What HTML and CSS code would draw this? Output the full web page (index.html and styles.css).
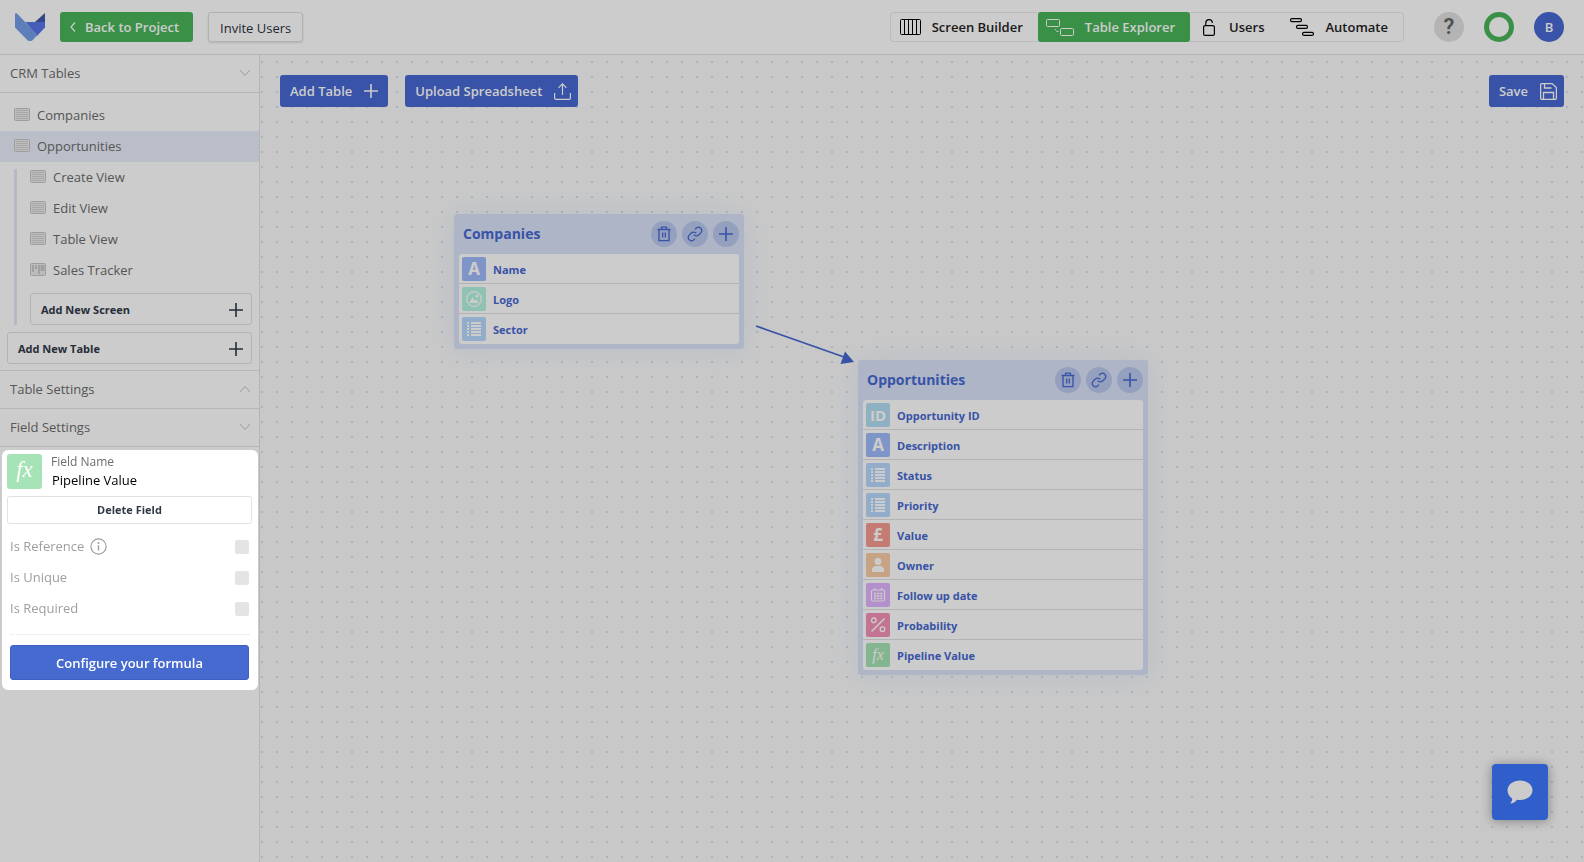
FILE: index.html
```html
<!DOCTYPE html>
<html lang="en">
<head>
<meta charset="utf-8">
<title>Table Explorer</title>
<link rel="stylesheet" href="styles.css">
</head>
<body>
<svg class="defs" aria-hidden="true">
  <symbol id="plus" viewBox="0 0 14 14"><path d="M7 0v14M0 7h14" fill="none" stroke="currentColor" stroke-width="1.6"/></symbol>
  <symbol id="chevron" viewBox="0 0 12 8"><path d="M1 1l5 5.500 5-5.500" fill="none" stroke="currentColor" stroke-width="1"/></symbol>
  <symbol id="screen" viewBox="0 0 16 13"><rect x=".5" y=".5" width="15" height="12" rx="1" fill="#ececec" stroke="currentColor"/><path d="M2 2.500h12M2 4.500h12M2 6.500h12M2 8.500h12M2 10.500h12" stroke="#d2d2d2"/></symbol>
  <symbol id="board" viewBox="0 0 16 13"><rect x=".5" y=".5" width="15" height="12" rx="1" fill="#ececec" stroke="currentColor"/><path d="M3 2v7M6 2v4M9 2v9M11.500 2v6M13.500 2v6" stroke="currentColor" stroke-width="1.800"/></symbol>
  <symbol id="trash" viewBox="0 0 16 16"><path d="M1.500 3.500h13M5.500 3.300V1.200h5v2.100M3 3.700v11h10v-11M6.700 6.500v5M9.300 6.500v5" fill="none" stroke="currentColor" stroke-width="1.300" stroke-linejoin="round"/></symbol>
  <symbol id="link" viewBox="0 0 24 24"><path d="M10 13a5 5 0 0 0 7.500.5l3.500-3.500a5 5 0 0 0-7-7l-2 2M14 11a5 5 0 0 0-7.500-.5L3 14a5 5 0 0 0 7 7l2-2" fill="none" stroke="currentColor" stroke-width="1.900"/></symbol>
  <symbol id="list" viewBox="0 0 16 16"><path d="M1 2h2M1 5h2M1 8h2M1 11h2M1 14h2M5 2h10M5 5h10M5 8h10M5 11h10M5 14h10" stroke="currentColor" stroke-width="2"/></symbol>
  <symbol id="image" viewBox="0 0 16 16"><circle cx="8" cy="8" r="7.300" fill="none" stroke="currentColor" stroke-width="1.200"/><path d="M3 12l3.500-5.500L9 10l1.200-1.500L13 12z" fill="currentColor"/><circle cx="11" cy="5" r="1.500" fill="currentColor"/></symbol>
  <symbol id="person" viewBox="0 0 16 16"><circle cx="8" cy="4.500" r="3.400" fill="currentColor"/><path d="M2 15v-2c0-2.500 2-4 4-4h4c2 0 4 1.500 4 4v2z" fill="currentColor"/></symbol>
  <symbol id="calendar" viewBox="0 0 16 16"><rect x="1.500" y="3" width="13" height="11" rx="1.500" fill="none" stroke="currentColor" stroke-width="1.200"/><path d="M4.500 1v2M11.500 1v2" stroke="currentColor" stroke-width="1.200"/><path d="M4 6.500h8.500M4 9h8.500M4 11.500h8.500" stroke="currentColor" stroke-width="1.700" stroke-dasharray="2.300 .8"/></symbol>
  <symbol id="percent" viewBox="0 0 16 16"><path d="M14.500 1.500l-13 13" stroke="currentColor" stroke-width="1.500"/><circle cx="3.800" cy="3.300" r="2.300" fill="none" stroke="currentColor" stroke-width="1.300"/><circle cx="12.500" cy="12.200" r="2.300" fill="none" stroke="currentColor" stroke-width="1.300"/></symbol>
</svg>

<header class="topbar">
  <svg class="logo" viewBox="0 0 30 28" aria-label="Home" role="img">
    <path d="M20.500 8.500L30 0v9h-10z" fill="#4358a8"/>
    <path d="M10.500 9H30v5.500L22 23z" fill="#5876e8"/>
    <path d="M0 1.500C0 0 1.500 0 2.500 1L22.500 22l-5 5.200c-1.500 1.200-3.500 1.200-5 0L0 14.500z" fill="#759fe8"/>
  </svg>
  <button class="back"><svg class="back-arrow" viewBox="0 0 6 10"><path d="M5 .5L1 5l4 4.500" fill="none" stroke="currentColor" stroke-width="1.200"/></svg>Back to Project</button>
  <button class="invite">Invite Users</button>
  <nav class="modes">
    <button class="mode mode-builder"><svg width="21" height="16" viewBox="0 0 21 16"><path d="M.5 1.500q0-1 1-1h18q1 0 1 1v13q0 1-1 1h-18q-1 0-1-1zM4.500 .5v15M8.500 .5v15M12.500 .5v15M16.500 .5v15" fill="none" stroke="currentColor"/></svg>Screen Builder</button>
    <button class="mode mode-tables"><svg width="28" height="17" viewBox="0 0 28 17"><rect x=".5" y=".5" width="13" height="7" rx="1" fill="none" stroke="currentColor"/><rect x="14.500" y="9.500" width="13" height="7" rx="1" fill="none" stroke="currentColor"/><path d="M9 10l1 1.500M10.500 12.500h2" stroke="currentColor"/></svg>Table Explorer</button>
    <button class="mode mode-users"><svg width="12" height="17" viewBox="0 0 12 17"><rect x=".6" y="6.600" width="10.800" height="9.800" rx="1.500" fill="none" stroke="currentColor" stroke-width="1.200"/><path d="M2.800 6.500V4c0-4.500 6.500-4.500 6.500 0" fill="none" stroke="currentColor" stroke-width="1.200"/></svg>Users</button>
    <button class="mode mode-automate"><svg width="24" height="18" viewBox="0 0 24 18"><g fill="none" stroke="currentColor" stroke-width="1.200"><rect x=".6" y=".6" width="10.800" height="3" rx="1.200"/><rect x="6.600" y="7.400" width="10.800" height="3" rx="1.200"/><rect x="12.600" y="14.300" width="10.800" height="3" rx="1.200"/></g></svg>Automate</button>
  </nav>
  <button class="round help">?</button>
  <span class="round ring"></span>
  <button class="round avatar">B</button>
</header>

<div class="workspace">
  <aside class="sidebar">
    <button class="section">CRM Tables<svg class="chevron"><use href="#chevron"/></svg></button>
    <div class="tables">
      <button class="item"><svg class="screen"><use href="#screen"/></svg>Companies</button>
      <button class="item selected"><svg class="screen"><use href="#screen"/></svg>Opportunities</button>
      <div class="views">
        <button class="item"><svg class="screen"><use href="#screen"/></svg>Create View</button>
        <button class="item"><svg class="screen"><use href="#screen"/></svg>Edit View</button>
        <button class="item"><svg class="screen"><use href="#screen"/></svg>Table View</button>
        <button class="item"><svg class="screen"><use href="#board"/></svg>Sales Tracker</button>
        <button class="outline add-screen">Add New Screen<svg class="plus"><use href="#plus"/></svg></button>
      </div>
      <button class="outline add-table">Add New Table<svg class="plus"><use href="#plus"/></svg></button>
    </div>
    <button class="section">Table Settings<svg class="chevron up"><use href="#chevron"/></svg></button>
    <button class="section">Field Settings<svg class="chevron"><use href="#chevron"/></svg></button>
    <form class="field-panel">
      <div class="field-head">
        <span class="field-icon">fx</span>
        <div class="field-name">
          <label for="field-name">Field Name</label>
          <input id="field-name" type="text" value="Pipeline Value">
        </div>
      </div>
      <button type="button" class="outline delete">Delete Field</button>
      <div class="options">
        <div class="option"><label for="is-reference">Is Reference</label><svg class="info" viewBox="0 0 17 17"><circle cx="8.500" cy="8.500" r="7.600" fill="none" stroke="currentColor" stroke-width="1.200"/><circle cx="8.500" cy="5" r="1" fill="currentColor"/><path d="M8.500 7.200v5.300" stroke="currentColor" stroke-width="1.500"/></svg><input id="is-reference" type="checkbox" disabled></div>
        <div class="option"><label for="is-unique">Is Unique</label><input id="is-unique" type="checkbox" disabled></div>
        <div class="option"><label for="is-required">Is Required</label><input id="is-required" type="checkbox" disabled></div>
      </div>
      <button type="button" class="configure">Configure your formula</button>
    </form>
  </aside>

  <main class="canvas">
    <div class="toolbar">
      <button class="primary">Add Table<svg class="plus"><use href="#plus"/></svg></button>
      <button class="primary upload">Upload Spreadsheet<svg width="17" height="17" viewBox="0 0 17 17"><path d="M.6 10v5q0 1.400 1.400 1.400h13q1.400 0 1.400-1.400v-5M8.500 12V1M4.500 4.800l4-4 4 4" fill="none" stroke="currentColor" stroke-width="1.200"/></svg></button>
      <button class="primary save">Save<svg width="17" height="17" viewBox="0 0 17 17"><path d="M.6 2q0-1.400 1.400-1.400h10l4.400 4V15q0 1.400-1.400 1.400H2Q.6 16.400.6 15zM3.500 16v-6.500h10V16M4.500 1v4h7" fill="none" stroke="currentColor" stroke-width="1.300"/></svg></button>
    </div>

    <svg class="arrow" viewBox="0 0 100 40"><path d="M1 3l88 31" stroke="#4768d1" stroke-width="1.800"/><path d="M90 28.500l9 10.500-13.500 2z" fill="#4768d1"/></svg>

    <section class="node companies">
      <div class="node-head"><h2>Companies</h2>
        <button class="tool" aria-label="Delete"><svg class="tool-icon"><use href="#trash"/></svg></button>
        <button class="tool" aria-label="Link"><svg class="tool-icon"><use href="#link"/></svg></button>
        <button class="tool" aria-label="Add"><svg class="plus"><use href="#plus"/></svg></button>
      </div>
      <ul class="fields">
        <li><span class="type text">A</span><span class="name">Name</span></li>
        <li><span class="type image"><svg><use href="#image"/></svg></span><span class="name">Logo</span></li>
        <li><span class="type list"><svg><use href="#list"/></svg></span><span class="name">Sector</span></li>
      </ul>
    </section>

    <section class="node opportunities">
      <div class="node-head"><h2>Opportunities</h2>
        <button class="tool" aria-label="Delete"><svg class="tool-icon"><use href="#trash"/></svg></button>
        <button class="tool" aria-label="Link"><svg class="tool-icon"><use href="#link"/></svg></button>
        <button class="tool" aria-label="Add"><svg class="plus"><use href="#plus"/></svg></button>
      </div>
      <ul class="fields">
        <li><span class="type id">ID</span><span class="name">Opportunity ID</span></li>
        <li><span class="type text">A</span><span class="name">Description</span></li>
        <li><span class="type list"><svg><use href="#list"/></svg></span><span class="name">Status</span></li>
        <li><span class="type list"><svg><use href="#list"/></svg></span><span class="name">Priority</span></li>
        <li><span class="type money">£</span><span class="name">Value</span></li>
        <li><span class="type person"><svg><use href="#person"/></svg></span><span class="name">Owner</span></li>
        <li><span class="type date"><svg><use href="#calendar"/></svg></span><span class="name">Follow up date</span></li>
        <li><span class="type percent"><svg><use href="#percent"/></svg></span><span class="name">Probability</span></li>
        <li><span class="type formula">fx</span><span class="name">Pipeline Value</span></li>
      </ul>
    </section>

    <button class="chat" aria-label="Chat"><svg width="26" height="24" viewBox="0 0 26 24"><path d="M13 .5C20 .5 25.500 4.800 25.500 10.200S20 20 13 20c-1 0-2-.1-3-.3C8.500 21.800 6 23.500 3.200 23.500c1.300-1.500 2-3 2-5C2.500 16.700.5 13.700.5 10.200.5 4.800 6 .5 13 .5z" fill="currentColor"/></svg></button>
  </main>
</div>
</body>
</html>
```
FILE: styles.css
```css
* { box-sizing: border-box; }

body {
  margin: 0;
  min-height: 100vh;
  display: flex;
  flex-direction: column;
  overflow: hidden;
  background: #fff;
  color: #6c6c6c;
  font: 13px/20px "Open Sans", "Noto Sans", sans-serif;
}

button {
  display: flex;
  align-items: center;
  margin: 0;
  padding: 0;
  border: 0;
  background: none;
  color: inherit;
  font: inherit;
  white-space: nowrap;
  cursor: pointer;
}

svg { flex: none; display: block; }
.defs { position: absolute; width: 0; height: 0; }
.plus { width: 14px; height: 14px; }

/* Top bar */
.topbar {
  display: flex;
  align-items: center;
  height: 55px;
  padding: 0 20px 0 15px;
  border-bottom: 1px solid #e2e2e2;
}
.logo { width: 30px; height: 28px; margin-right: 15px; }
.back {
  height: 30px;
  padding: 0 14px 0 10px;
  gap: 9px;
  border-radius: 3px;
  background: #4ab55b;
  color: #fff;
  font-weight: 600;
}
.back-arrow { width: 6px; height: 10px; }
.invite {
  height: 30px;
  margin-left: 15px;
  padding: 2px 11px 0;
  border: 1px solid #dedede;
  border-radius: 3px;
  box-shadow: 0 1px 2px rgba(0, 0, 0, .12);
  color: #2c3340;
}
.modes {
  display: flex;
  height: 30px;
  margin: 0 30px 0 auto;
  border-radius: 4px;
  box-shadow: inset 0 0 0 1px #eaeaea;
}
.mode { color: #222; font-weight: 600; }
.mode-builder { padding: 0 15px 0 10px; gap: 11px; }
.mode-tables {
  padding: 0 15px 0 8px;
  gap: 11px;
  border-radius: 3px;
  background: #4ab55b;
  color: #fff;
}
.mode-users { padding: 0 13px; gap: 14px; }
.mode-automate { padding: 0 16px 0 13px; gap: 11px; }
.mode svg { color: #000; }
.mode-tables svg { color: #fff; }
.round {
  justify-content: center;
  width: 30px;
  height: 30px;
  margin-left: 20px;
  border-radius: 50%;
}
.help {
  margin-left: 0;
  background: #e2e2e2;
  color: #666;
  font: 600 22px/30px Roboto, sans-serif;
}
.ring { border: 5px solid #4ab55b; }
.avatar { background: #4768d1; color: #fff; font-weight: 600; font-size: 13px; }

.workspace { flex: 1; display: flex; }

/* Sidebar */
.sidebar {
  flex: none;
  width: 260px;
  border-right: 1px solid #e2e2e2;
}
.section {
  justify-content: space-between;
  width: 100%;
  height: 38px;
  padding: 0 8px 1px 10px;
  border-bottom: 1px solid #e4e4e4;
  font-weight: 500;
}
.chevron { width: 12px; height: 8px; color: #c4c4c4; }
.up { transform: rotate(180deg); }
.tables { padding-top: 7px; border-bottom: 1px solid #e4e4e4; }
.item {
  width: 100%;
  height: 31px;
  padding: 0 0 2px 14px;
  gap: 7px;
  font-weight: 500;
}
.selected { background: #e8eefb; }
.screen { width: 16px; height: 13px; color: #c6c6c6; }
.views {
  position: relative;
  padding: 0 7px 0 16px;
}
.views::before {
  content: "";
  position: absolute;
  inset: 7px auto 0 14px;
  width: 3px;
  background: #e3e8f8;
}
.outline {
  justify-content: space-between;
  height: 32px;
  padding: 0 8px 0 10px;
  border: 1px solid #e2e2e2;
  border-radius: 3px;
  color: #303848;
  font-size: 11px;
  font-weight: 700;
}
.add-screen { width: calc(100% - 14px); margin: 7px 0 0 14px; padding-top: 1px; }
.add-table { width: calc(100% - 14px); margin: 7px 7px 6px; padding-top: 1px; }

/* The highlighted panel dims everything around it */
.field-panel {
  position: relative;
  z-index: 10;
  margin: 3px 1px 0 2px;
  padding: 4px 6px 10px 5px;
  border-radius: 6px;
  background: #fff;
  box-shadow: 0 0 0 9999px rgba(0, 0, 0, .2);
}
.field-head { display: flex; gap: 9px; height: 35px; }
.field-icon {
  width: 35px;
  height: 35px;
  border-radius: 3px;
  background: #a6e3b6;
  color: #fff;
  font: italic 23px/32px "Liberation Serif", serif;
  text-align: center;
}
.field-name {
  flex: 1;
  display: flex;
  flex-direction: column;
  min-width: 0;
  font-size: 12px;
}
.field-name label { height: 16px; line-height: 16px; }
.field-name input {
  width: 100%;
  height: 20px;
  padding: 0 1px;
  border: 0;
  outline: 0;
  background: none;
  color: #000;
  font: 13px/20px "Open Sans", sans-serif;
}
.delete {
  justify-content: center;
  width: 100%;
  height: 28px;
  margin-top: 7px;
  padding: 0;
}
.options {
  margin: 7px 3px 10px;
  padding-bottom: 10px;
  border-bottom: 1px dotted #e2e2e2;
  color: #9e9e9e;
  font-weight: 500;
}
.option { display: flex; align-items: center; gap: 6px; height: 31px; }
.option label { padding-bottom: 2px; }
.info { width: 17px; height: 17px; color: #a0a0a0; }
.option input {
  appearance: none;
  width: 14px;
  height: 14px;
  margin: 0 0 0 auto;
  border-radius: 2px;
  background: #e4e4e4;
}
.configure {
  justify-content: center;
  width: calc(100% - 6px);
  height: 35px;
  margin: 0 3px;
  border: 1px solid #3f60c2;
  border-radius: 3px;
  background: #466ad0;
  color: #fff;
  font-weight: 600;
}

/* Canvas */
.canvas {
  flex: 1;
  position: relative;
  min-width: 0;
  background-color: #fbfbfb;
  background-image: radial-gradient(circle at 2px 7px, #d3e1f5 0, #d3e1f5 1px, transparent 1px);
  background-size: 15px 15px;
}
.toolbar { display: flex; gap: 17px; padding: 20px; }
.primary {
  height: 32px;
  padding: 0 10px;
  gap: 12px;
  border-radius: 3px;
  background: #4768d1;
  color: #fff;
  font-weight: 600;
}
.upload, .save { padding-right: 7px; }
.save { margin-left: auto; }

.arrow {
  position: absolute;
  left: 495px;
  top: 268px;
  width: 100px;
  height: 40px;
  overflow: visible;
}
.node {
  position: absolute;
  width: 290px;
  padding: 0 5px 5px;
  border-radius: 3px;
  background: #d9e3f8;
  box-shadow: 0 0 30px rgba(71, 104, 209, .1);
  color: #4768d1;
}
.companies { left: 194px; top: 159px; }
.opportunities { left: 598px; top: 305px; }
.node-head {
  display: flex;
  align-items: center;
  gap: 5px;
  height: 40px;
}
.node-head h2 {
  flex: 1;
  margin: 0;
  padding-left: 4px;
  font-size: 14px;
  font-weight: 700;
}
.tool {
  justify-content: center;
  width: 26px;
  height: 26px;
  border-radius: 50%;
  background: #bbc8ee;
}
.tool-icon { width: 16px; height: 16px; }
.fields {
  margin: 0;
  padding: 0;
  border-radius: 3px;
  background: #fff;
  list-style: none;
  font-size: 11px;
  font-weight: 700;
}
.fields li {
  display: flex;
  align-items: center;
  gap: 7px;
  height: 30px;
  padding: 1px 3px 0;
  border-bottom: 1px solid #e2e2e2;
}
.fields li:last-child { border-bottom-color: transparent; }
.name { padding-top: 2px; }
.type {
  display: flex;
  align-items: center;
  justify-content: center;
  width: 24px;
  height: 24px;
  border-radius: 2px;
  color: #fff;
  font-size: 17px;
  line-height: 24px;
}
.type svg { width: 16px; height: 16px; }
.text { background: #9fbbfb; }
.image { background: #b3f3df; }
.list { background: #b8d8fc; }
.id { background: #b3ddf0; font-size: 15px; }
.money { background: #f49a91; }
.person { background: #f9cca8; }
.date { background: #e0b3ff; }
.percent { background: #f692b8; }
.formula {
  background: #a6e3b6;
  font: italic 16px/22px "Liberation Serif", serif;
}

.chat {
  position: fixed;
  right: 36px;
  bottom: 42px;
  justify-content: center;
  width: 56px;
  height: 56px;
  border-radius: 4px;
  background: #3c77ff;
  box-shadow: 0 1px 12px rgba(0, 0, 0, .35);
  color: #fff;
}
```
